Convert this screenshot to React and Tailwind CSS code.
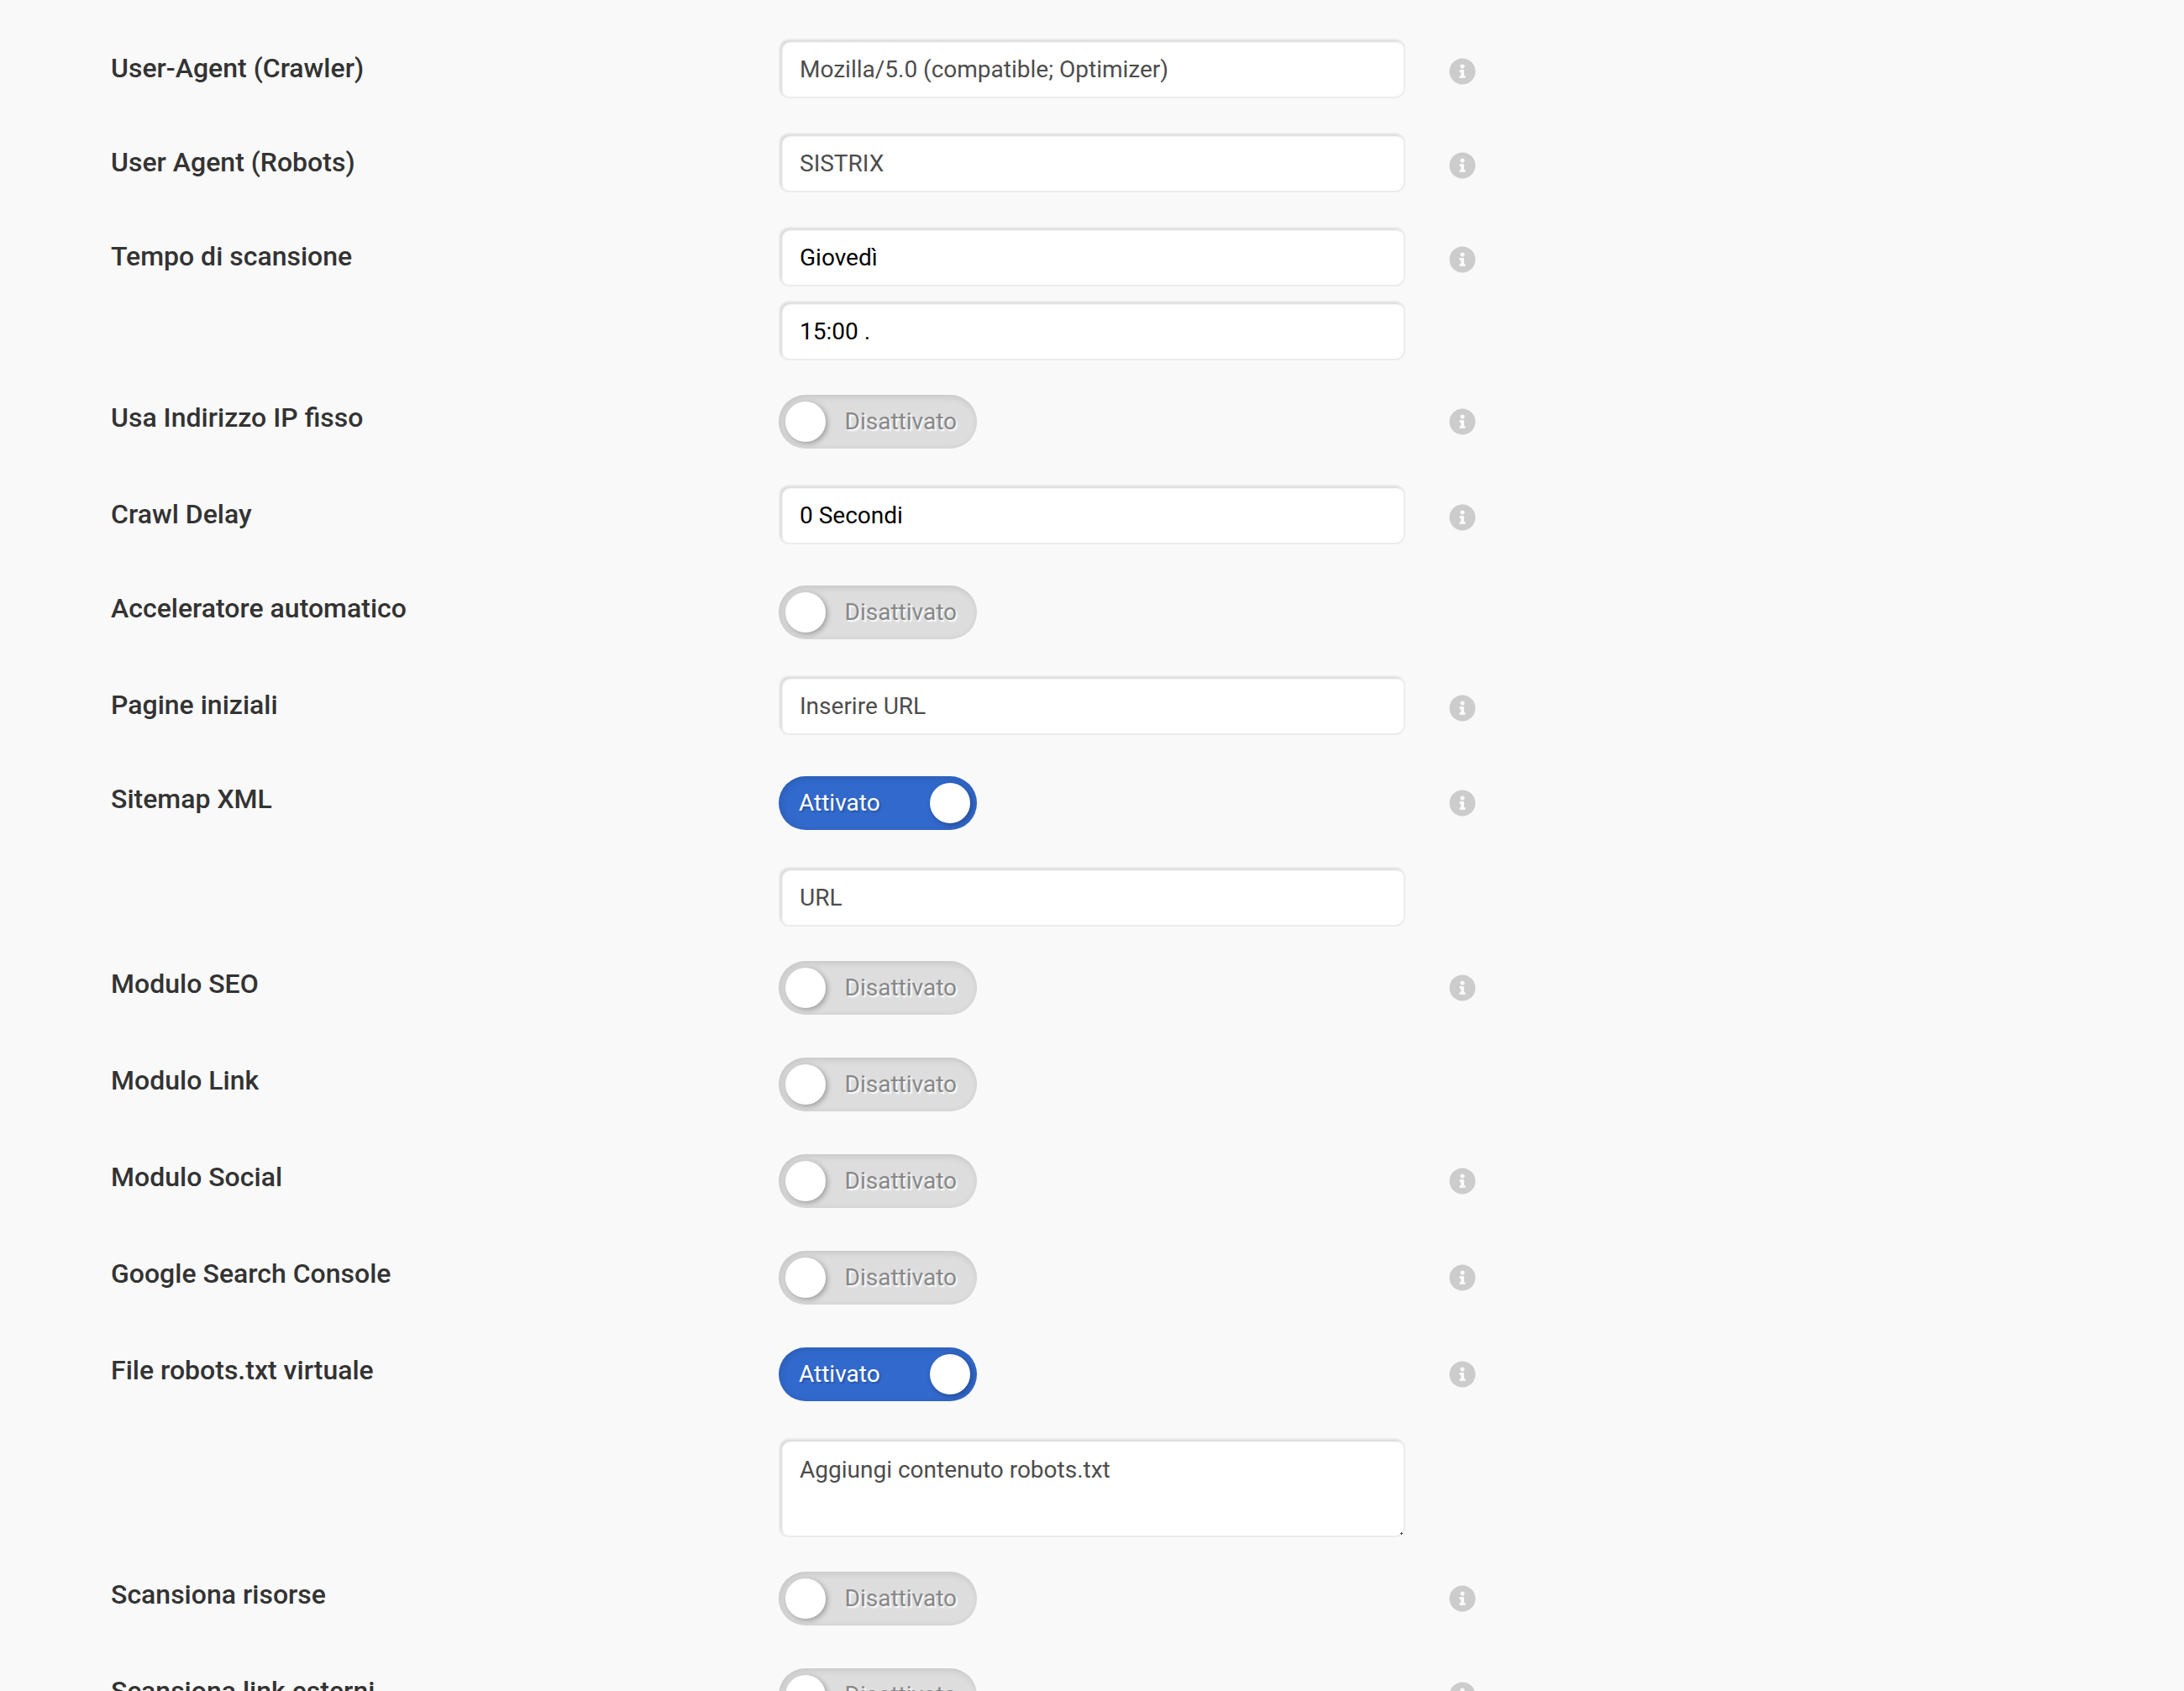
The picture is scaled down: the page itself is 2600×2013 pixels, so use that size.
import React from 'react';
import clsx from 'clsx';
import { FaInfoCircle } from 'react-icons/fa';

function Row({ id, label, toggle, extended, info = true, children }) {
  return (
    <div
      className={clsx(
        'grid grid-cols-[795fr_746fr_795fr] items-start',
        toggle && 'pt-2',
        toggle && !extended && 'pb-[2px]',
        extended && '-mb-2'
      )}
    >
      <label
        htmlFor={id}
        className={clsx('text-[32px] leading-9 font-medium text-[#333333]', toggle ? 'mt-[9px]' : 'mt-[17px]')}
      >
        {label}
      </label>
      {children}
      {info && (
        <div className="pl-[52px]">
          <button
            type="button"
            aria-label={`Info: ${label}`}
            className={clsx('block text-[#cccccc] cursor-pointer', toggle ? 'mt-4' : 'mt-[23px]')}
          >
            <FaInfoCircle className="w-8 h-8" />
          </button>
        </div>
      )}
    </div>
  );
}

const fieldClass =
  'block w-full rounded-[12px] border-2 border-black/5 bg-white bg-clip-padding px-[23px] text-[28px] leading-8 shadow-[inset_2px_2px_2px_rgba(0,0,0,0.15)] outline-none placeholder:text-[#4d4d4d] placeholder:opacity-100';

function Field(props) {
  return <input type="text" className={`${fieldClass} h-[71px] pt-[2px] text-[#4d4d4d]`} {...props} />;
}

function Select({ value, ...props }) {
  return (
    <select className={`${fieldClass} h-[71px] pt-[2px] appearance-none text-black`} {...props}>
      <option>{value}</option>
    </select>
  );
}

function Toggle({ id, on = false }) {
  return (
    <span className="relative block w-[236px] h-16">
      <input
        id={id}
        type="checkbox"
        role="switch"
        defaultChecked={on}
        className="peer absolute inset-0 z-10 w-full h-full opacity-0 cursor-pointer"
      />
      <span className="flex items-center justify-between w-full h-full rounded-full px-2 bg-[#dddddd] text-[28px] leading-8 text-[#888888] shadow-[inset_2px_2px_8px_rgba(0,0,0,0.12)] [text-shadow:2px_2px_2px_#fff] peer-checked:flex-row-reverse peer-checked:bg-[#3269cc] peer-checked:text-white peer-checked:[text-shadow:2px_2px_2px_rgba(0,0,0,0.2)]">
        <span className="w-12 h-12 rounded-full bg-white shadow-[2px_2px_6px_rgba(0,0,0,0.3)]"></span>
        <span className="px-4">{on ? 'Attivato' : 'Disattivato'}</span>
      </span>
    </span>
  );
}

export default function App() {
  return (
    <form className="min-h-screen bg-[#f9f9f9] px-[132px] pt-[46px] font-[Roboto,sans-serif]">
      <div className="flex flex-col gap-[41px]">
        {/* Crawler identity */}
        <Row id="ua-crawler" label="User-Agent (Crawler)">
          <Field id="ua-crawler" placeholder="Mozilla/5.0 (compatible; Optimizer)" />
        </Row>
        <Row id="ua-robots" label="User Agent (Robots)">
          <Field id="ua-robots" placeholder="SISTRIX" />
        </Row>

        {/* Schedule */}
        <Row id="scan-day" label="Tempo di scansione" extended>
          <div className="flex flex-col gap-[17px]">
            <Select id="scan-day" value="Giovedì" />
            <Select aria-label="Ora di scansione" value="15:00 ." />
          </div>
        </Row>
        <Row id="fixed-ip" label="Usa Indirizzo IP fisso" toggle>
          <Toggle id="fixed-ip" />
        </Row>
        <Row id="crawl-delay" label="Crawl Delay">
          <Select id="crawl-delay" value="0 Secondi" />
        </Row>
        <Row id="accelerator" label="Acceleratore automatico" toggle info={false}>
          <Toggle id="accelerator" />
        </Row>

        {/* Sources */}
        <Row id="start-pages" label="Pagine iniziali">
          <Field id="start-pages" placeholder="Inserire URL" />
        </Row>
        <Row id="sitemap" label="Sitemap XML" toggle extended>
          <div className="flex flex-col gap-11">
            <Toggle id="sitemap" on />
            <Field aria-label="URL Sitemap" placeholder="URL" />
          </div>
        </Row>

        {/* Modules */}
        <Row id="seo" label="Modulo SEO" toggle>
          <Toggle id="seo" />
        </Row>
        <Row id="link" label="Modulo Link" toggle info={false}>
          <Toggle id="link" />
        </Row>
        <Row id="social" label="Modulo Social" toggle>
          <Toggle id="social" />
        </Row>
        <Row id="gsc" label="Google Search Console" toggle>
          <Toggle id="gsc" />
        </Row>

        {/* Virtual robots.txt */}
        <Row id="robots" label="File robots.txt virtuale" toggle extended>
          <div className="flex flex-col gap-11">
            <Toggle id="robots" on />
            <div className="relative">
              <textarea
                aria-label="Contenuto robots.txt"
                placeholder="Aggiungi contenuto robots.txt"
                className={`${fieldClass} h-[118px] pt-5 resize-none text-[#4d4d4d]`}
              />
              <svg className="absolute right-[3px] bottom-[3px] w-[3px] h-[3px]" viewBox="0 0 3 3" stroke="#444444">
                <path d="M1.5 0v3M0 1.5h3" />
              </svg>
            </div>
          </div>
        </Row>
        <Row id="resources" label="Scansiona risorse" toggle>
          <Toggle id="resources" />
        </Row>
        <Row id="external" label="Scansiona link esterni" toggle>
          <Toggle id="external" />
        </Row>
      </div>
    </form>
  );
}
